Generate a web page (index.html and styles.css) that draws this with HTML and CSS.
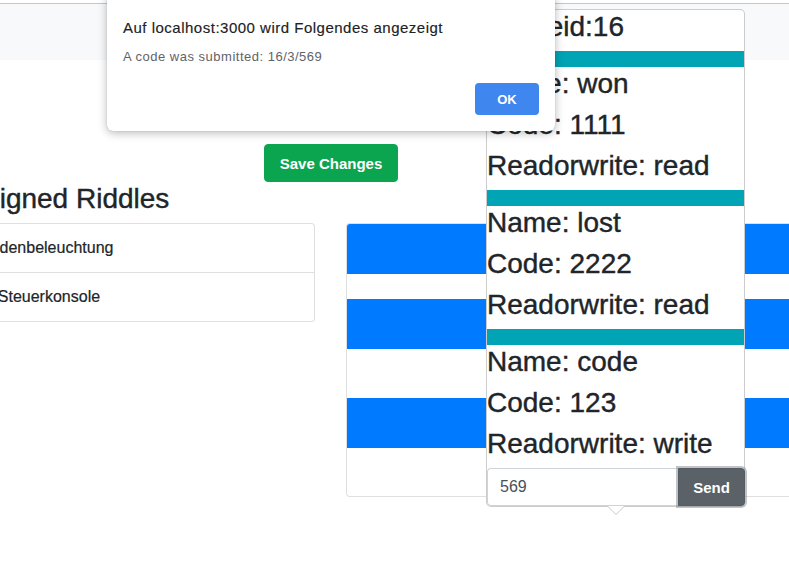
FILE: index.html
```html
<!DOCTYPE html>
<html lang="de">
<head>
<meta charset="utf-8">
<title>Riddles</title>
<link rel="stylesheet" href="styles.css">
</head>
<body>
<div class="topline"></div>
<nav class="navbar">
  <a class="nav-link" href="#">Edit</a>
</nav>
<main class="main">
  <div class="actions">
    <button class="btn btn-success" type="button">Save Changes</button>
  </div>
  <div class="row">
    <section class="col-left">
      <h3 class="heading">Assigned Riddles</h3>
      <ul class="list-group">
        <li class="list-item">Bodenbeleuchtung</li>
        <li class="list-item">1. Steuerkonsole</li>
      </ul>
    </section>
    <section class="col-right">
      <div class="card">
        <div class="acc-head"></div>
        <div class="acc-body body-a"></div>
        <div class="acc-head"></div>
        <div class="acc-body body-b"></div>
        <div class="acc-head"></div>
        <div class="acc-body body-c"></div>
      </div>
    </section>
  </div>
</main>

<div class="popover">
  <h3 class="pop-line">Gameid:16</h3>
  <div class="pop-bar"></div>
  <h3 class="pop-line">Name: won</h3>
  <h3 class="pop-line">Code: 1111</h3>
  <h3 class="pop-line">Readorwrite: read</h3>
  <div class="pop-bar"></div>
  <h3 class="pop-line">Name: lost</h3>
  <h3 class="pop-line">Code: 2222</h3>
  <h3 class="pop-line">Readorwrite: read</h3>
  <div class="pop-bar"></div>
  <h3 class="pop-line">Name: code</h3>
  <h3 class="pop-line">Code: 123</h3>
  <h3 class="pop-line">Readorwrite: write</h3>
  <div class="input-group">
    <input class="form-control" type="text" value="569">
    <button class="btn btn-send" type="button">Send</button>
  </div>
</div>

<div class="dialog">
  <div class="dialog-title">Auf localhost:3000 wird Folgendes angezeigt</div>
  <div class="dialog-msg">A code was submitted: 16/3/569</div>
  <div class="dialog-actions">
    <button class="btn-ok" type="button">OK</button>
  </div>
</div>
</body>
</html>
```

FILE: styles.css
```css
* { box-sizing: border-box; }

html, body {
  margin: 0;
  padding: 0;
  width: 789px;
  height: 582px;
  overflow: hidden;
  background: #fff;
  font-family: "Liberation Sans", Arial, sans-serif;
  color: #212529;
}

.topline {
  height: 4px;
  border-bottom: 1px solid #c6c6c6;
}

.navbar {
  height: 56px;
  background: #f8f9fa;
  display: flex;
  align-items: center;
  justify-content: flex-end;
  margin-right: -30px;
}

.nav-link {
  color: rgba(0, 0, 0, 0.5);
  text-decoration: none;
  font-size: 16px;
  line-height: 24px;
}

.main {
  padding-top: 84px;
}

.actions {
  width: 662px;
  display: flex;
  justify-content: center;
}

.btn {
  font-family: "Liberation Sans", Arial, sans-serif;
  cursor: pointer;
}

.btn-success {
  width: 134px;
  height: 38px;
  padding: 0 12px;
  border: 1px solid #0ba44f;
  border-radius: 4px;
  background: #0ba44f;
  color: #fff;
  font-size: 15px;
  font-weight: bold;
}

.row {
  display: flex;
  gap: 31px;
  margin-left: -47px;
}

.col-left {
  width: 362px;
  flex: none;
}

.heading {
  margin: 0 0 8px;
  font-size: 28px;
  line-height: 33px;
  font-weight: 500;
  white-space: nowrap;
  -webkit-text-stroke: 0.4px #212529;
}

.list-group {
  list-style: none;
  margin: 0 0 0 7px;
  padding: 0;
}

.list-item {
  height: 50px;
  padding: 12px 19px;
  font-size: 16px;
  line-height: 24px;
  border: 1px solid rgba(0, 0, 0, 0.125);
  margin-bottom: -1px;
  background: #fff;
  white-space: nowrap;
  -webkit-text-stroke: 0.2px #212529;
}

.list-item:first-child {
  border-top-left-radius: 4px;
  border-top-right-radius: 4px;
}

.list-item:last-child {
  border-bottom-left-radius: 4px;
  border-bottom-right-radius: 4px;
}

.col-right {
  width: 560px;
  flex: none;
  padding-top: 41px;
}

.card {
  border: 1px solid rgba(0, 0, 0, 0.125);
  border-radius: 4px;
  overflow: hidden;
  background: #fff;
}

.acc-head {
  height: 50px;
  background: #007bff;
}

.acc-head:first-child {
  margin-top: -1px;
  height: 51px;
}

.body-a { height: 25px; }
.body-b { height: 49px; }
.body-c { height: 48px; }

/* popover */
.popover {
  position: absolute;
  left: 486px;
  top: 9px;
  width: 259px;
  background: #fff;
  border: 1px solid rgba(0, 0, 0, 0.2);
  border-radius: 5px;
}

.popover::before,
.popover::after {
  content: "";
  position: absolute;
  left: 50%;
  margin-left: -8px;
  border-left: 8px solid transparent;
  border-right: 8px solid transparent;
}

.popover::before {
  bottom: -9px;
  border-top: 8px solid rgba(0, 0, 0, 0.22);
}

.popover::after {
  bottom: -8px;
  border-top: 8px solid #fff;
}

.pop-line {
  margin: 0 0 8px;
  font-size: 28px;
  line-height: 33px;
  font-weight: 500;
  white-space: nowrap;
  color: #212529;
  -webkit-text-stroke: 0.4px #212529;
}

.pop-bar {
  height: 16px;
  background: #00a4b4;
}

.input-group {
  display: flex;
  height: 38px;
  margin-right: -1px;
}

.form-control {
  flex: 1;
  min-width: 0;
  height: 38px;
  padding: 0 12px;
  border: 1px solid #ced4da;
  border-right: none;
  border-radius: 4px 0 0 4px;
  font-family: "Liberation Sans", Arial, sans-serif;
  font-size: 16px;
  color: #495057;
  outline: none;
}

.btn-send {
  width: 67px;
  flex: none;
  height: 38px;
  border: 1px solid #545b62;
  border-radius: 0 4px 4px 0;
  background: #5a6268;
  color: #fff;
  font-size: 15px;
  font-weight: bold;
  box-shadow: 0 0 0 2px rgba(130, 138, 145, 0.5);
}

/* alert dialog */
.dialog {
  position: absolute;
  left: 107px;
  top: -6px;
  width: 448px;
  height: 137px;
  padding: 25px 16px 0;
  background: #fff;
  border-radius: 6px;
  box-shadow: 0 2px 10px rgba(0, 0, 0, 0.28), 0 0 1px rgba(0, 0, 0, 0.3);
  font-family: "Liberation Sans", Arial, sans-serif;
}

.dialog-title {
  font-size: 15px;
  line-height: 18px;
  letter-spacing: 0.5px;
  color: #202124;
  white-space: nowrap;
  -webkit-text-stroke: 0.15px #202124;
}

.dialog-msg {
  margin-top: 12px;
  font-size: 13px;
  line-height: 16px;
  letter-spacing: 0.5px;
  color: #5f6368;
  white-space: nowrap;
}

.dialog-actions {
  display: flex;
  justify-content: flex-end;
  margin-top: 18px;
}

.btn-ok {
  width: 64px;
  height: 32px;
  border: none;
  border-radius: 4px;
  background: #3f87ef;
  color: #fff;
  font-family: "Liberation Sans", Arial, sans-serif;
  font-size: 13px;
  font-weight: bold;
}
```
